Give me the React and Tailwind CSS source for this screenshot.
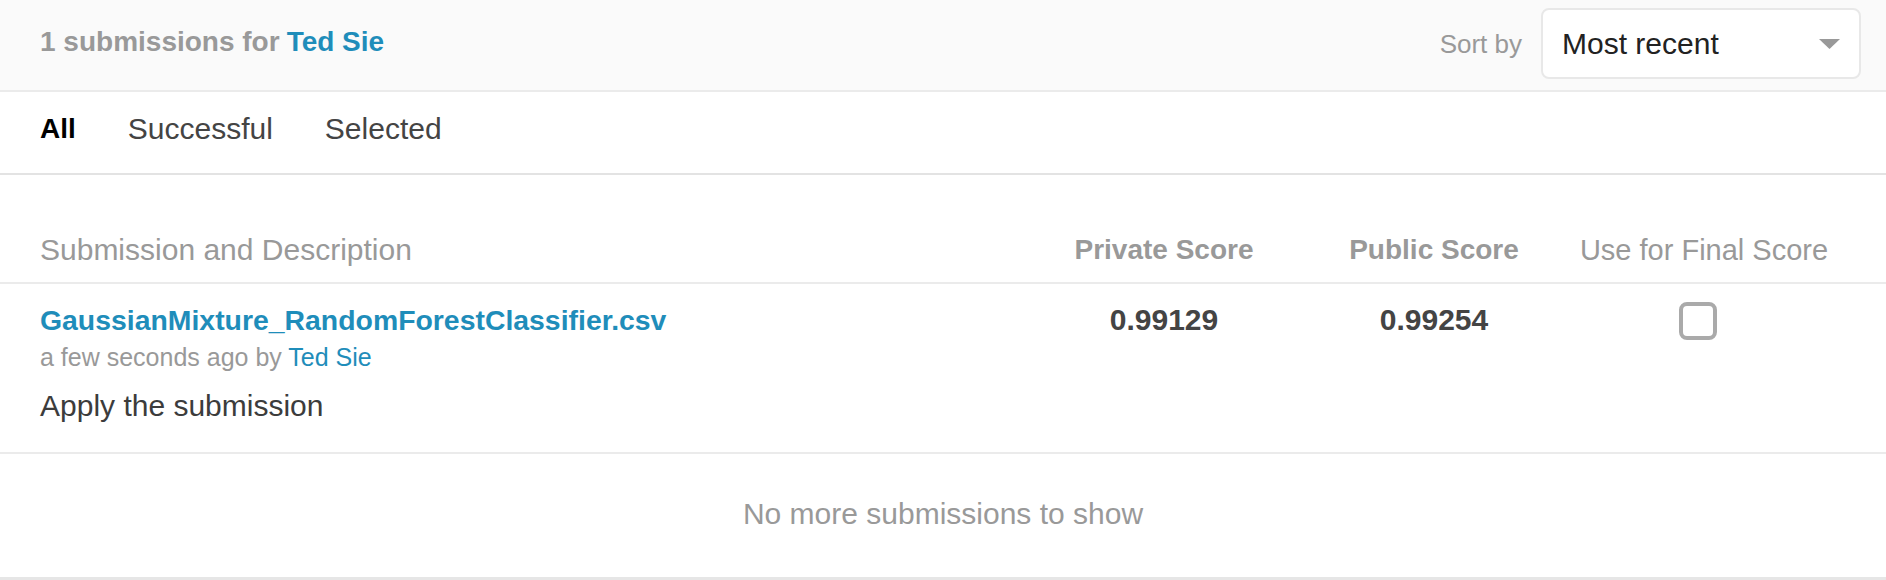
export default function App() {
  return (
    <div className="w-full bg-white font-['Liberation_Sans',Arial,sans-serif]">
      <header className="flex items-center justify-between bg-[#fafafa] border-b-2 border-[#ebebeb] pl-[40px] pr-[25px] pt-[8px] pb-[11px]">
        <h2 className="text-[28px] leading-[36px] font-bold text-[#999] mb-[4px]">
          1 submissions for<a className="ml-[7px] text-[#1f8dba]">Ted Sie</a>
        </h2>
        <div className="flex items-center gap-[19px]">
          <span className="text-[26px] leading-[36px] text-[#999]">Sort by</span>
          <div className="flex items-center justify-between w-[320px] h-[71px] bg-white border-2 border-[#e8e8e8] rounded-[8px] pl-[19px] pr-[19px]">
            <span className="text-[30px] leading-[36px] text-[#222]">Most recent</span>
            <svg width="21" height="10" viewBox="0 0 21 10">
              <polygon points="0,0 21,0 10.5,10" fill="#999" />
            </svg>
          </div>
        </div>
      </header>

      <nav className="flex gap-[52px] pl-[40px] pt-[19px] pb-[26px] border-b-2 border-[#e3e3e3] leading-[36px]">
        <span className="text-[28px] font-bold text-black">All</span>
        <span className="text-[30px] text-[#444]">Successful</span>
        <span className="text-[30px] text-[#444]">Selected</span>
      </nav>

      <div className="grid grid-cols-[1fr_270px_270px_270px] pl-[40px] pr-[47px] pt-[57px] pb-[14px] border-b-2 border-[#ebebeb] leading-[36px] text-[#999]">
        <span className="text-[30px]">Submission and Description</span>
        <span className="text-[28px] font-bold text-center">Private Score</span>
        <span className="text-[28px] font-bold text-center">Public Score</span>
        <span className="text-[29px] text-center">Use for Final Score</span>
      </div>

      <div className="grid grid-cols-[1fr_270px_270px_270px] items-start pl-[40px] pr-[47px] pt-[18px] pb-[28px] border-b-2 border-[#ebebeb]">
        <div className="flex flex-col">
          <a className="text-[28.4px] leading-[36px] font-bold text-[#1f8dba]">
            GaussianMixture_RandomForestClassifier.csv
          </a>
          <div className="mt-[4px] text-[25px] leading-[30px] text-[#999]">
            a few seconds ago by <a className="text-[#1f8dba]">Ted Sie</a>
          </div>
          <div className="mt-[16px] text-[30px] leading-[36px] text-[#3c3c3c]">Apply the submission</div>
        </div>
        <span className="text-[30px] leading-[36px] font-bold text-[#444] text-center">0.99129</span>
        <span className="text-[30px] leading-[36px] font-bold text-[#444] text-center">0.99254</span>
        <div className="flex justify-center">
          <div className="mr-[12px] w-[38px] h-[38px] rounded-[8px] border-[4px] border-[#aaa] bg-white" />
        </div>
      </div>

      <div className="pt-[42px] pb-[45px] text-center text-[30px] leading-[36px] text-[#999] border-b-[3px] border-[#e6e6e6]">
        No more submissions to show
      </div>
    </div>
  );
}
